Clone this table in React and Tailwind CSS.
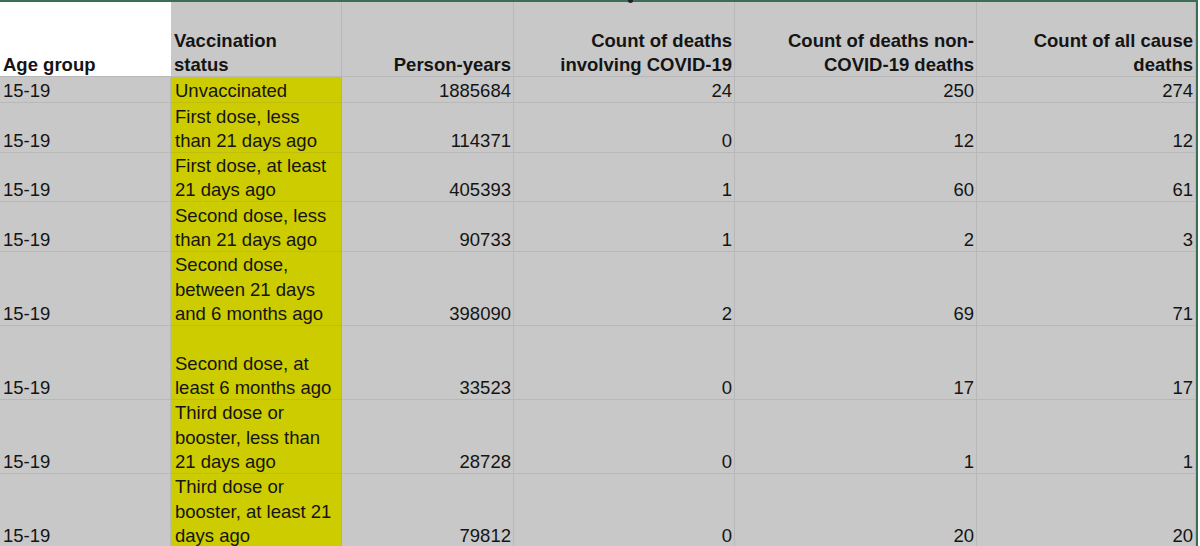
import React from "react";

const rows = [
  { h: "h-[26px]", status: ["Unvaccinated"], py: "1885684", covid: "24", non: "250", all: "274" },
  { h: "h-[50px]", status: ["First dose, less", "than 21 days ago"], py: "114371", covid: "0", non: "12", all: "12" },
  { h: "h-[49px]", status: ["First dose, at least", "21 days ago"], py: "405393", covid: "1", non: "60", all: "61" },
  { h: "h-[50px]", status: ["Second dose, less", "than 21 days ago"], py: "90733", covid: "1", non: "2", all: "3" },
  { h: "h-[74px]", status: ["Second dose,", "between 21 days", "and 6 months ago"], py: "398090", covid: "2", non: "69", all: "71" },
  { h: "h-[74px]", status: ["Second dose, at", "least 6 months ago"], py: "33523", covid: "0", non: "17", all: "17" },
  { h: "h-[74px]", status: ["Third dose or", "booster, less than", "21 days ago"], py: "28728", covid: "0", non: "1", all: "1" },
  { h: "h-[74px]", status: ["Third dose or", "booster, at least 21", "days ago"], py: "79812", covid: "0", non: "20", all: "20" },
];

const cell = "flex flex-col justify-end border-b border-r border-[#b8b8b8] px-[3px] leading-[24.6px] whitespace-nowrap";

// text sits a touch lower than the line box, like Excel's bottom-aligned cells
const Lines = ({ lines }) => (
  <div className="-mb-[2px]">
    {lines.map((l) => (
      <div key={l}>{l}</div>
    ))}
  </div>
);

const App = () => {
  return (
    <div
      className="w-[1200px] h-[546px] overflow-hidden bg-white text-[18.5px] text-[#141414]"
      style={{ fontFamily: '"Liberation Sans", Arial, sans-serif' }}
    >
      <div className="relative w-[1198px] border-t-2 border-r-2 border-[#3d6e55]">
        {/* cut-off title descender */}
        <div className="absolute -top-[2px] left-[628px] h-[3px] w-[5px] rounded-b-full bg-[#222]" />
        <div className="grid grid-cols-[171px_171px_172px_221px_242px_219px] bg-[#c8c8c8]">
          {/* Header */}
          <div className={`${cell} h-[75px] bg-white font-bold border-r-0`}>
            <Lines lines={["Age group"]} />
          </div>
          <div className={`${cell} h-[75px] font-bold`}>
            <Lines lines={["Vaccination", "status"]} />
          </div>
          <div className={`${cell} h-[75px] font-bold text-right pr-[2px]`}>
            <Lines lines={["Person-years"]} />
          </div>
          <div className={`${cell} h-[75px] font-bold text-right pr-[2px]`}>
            <Lines lines={["Count of deaths", "involving COVID-19"]} />
          </div>
          <div className={`${cell} h-[75px] font-bold text-right pr-[2px]`}>
            <Lines lines={["Count of deaths non-", "COVID-19 deaths"]} />
          </div>
          <div className={`${cell} h-[75px] font-bold text-right pr-[2px]`}>
            <Lines lines={["Count of all cause", "deaths"]} />
          </div>

          {/* Body */}
          {rows.map((r, i) => (
            <React.Fragment key={i}>
              <div className={`${cell} ${r.h}`}>
                <Lines lines={["15-19"]} />
              </div>
              <div className={`${cell} ${r.h} bg-[#cccc00] border-[#bfbf10] pl-[4px]`}>
                <Lines lines={r.status} />
              </div>
              <div className={`${cell} ${r.h} text-right pr-[2px]`}>
                <Lines lines={[r.py]} />
              </div>
              <div className={`${cell} ${r.h} text-right pr-[2px]`}>
                <Lines lines={[r.covid]} />
              </div>
              <div className={`${cell} ${r.h} text-right pr-[2px]`}>
                <Lines lines={[r.non]} />
              </div>
              <div className={`${cell} ${r.h} text-right pr-[2px]`}>
                <Lines lines={[r.all]} />
              </div>
            </React.Fragment>
          ))}
        </div>
      </div>
    </div>
  );
};

export default App;
